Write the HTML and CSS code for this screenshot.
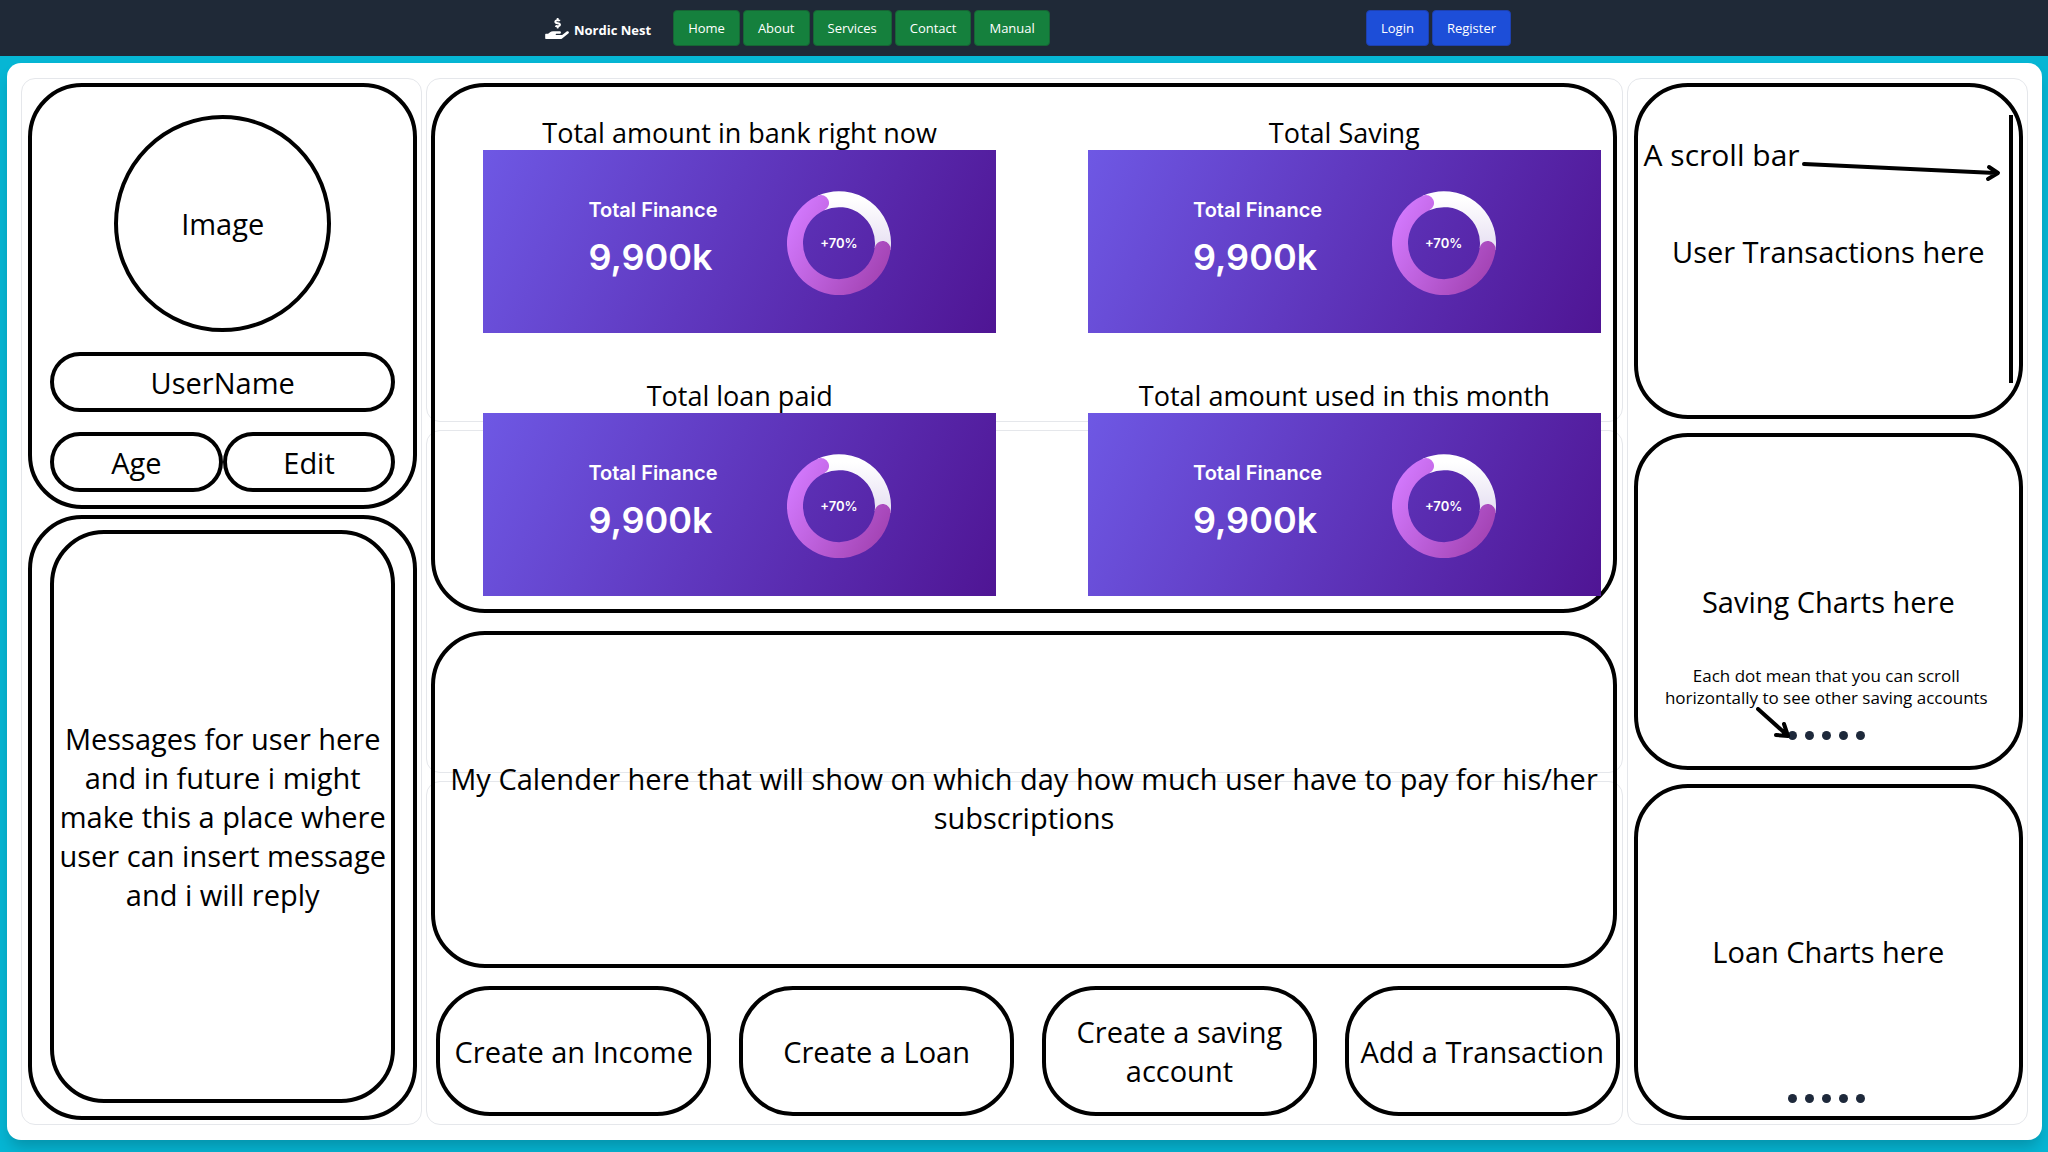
FILE: index.html
```html
<!DOCTYPE html>
<html lang="en">
<head>
<meta charset="utf-8">
<meta name="viewport" content="width=device-width, initial-scale=1">
<title>Nordic Nest</title>
<link rel="stylesheet" href="styles.css">
</head>
<body>
<header class="topbar">
  <nav class="topbar-inner">
    <a class="brand" href="#">
      <svg class="brand-icon" viewBox="0 0 576 512" aria-hidden="true"><path fill="currentColor" d="M271.06,144.3l54.27,14.3a8.59,8.59,0,0,1,6.63,8.1c0,4.6-4.09,8.4-9.12,8.4h-35.6a30,30,0,0,1-11.19-2.2c-5.24-2.2-11.28-1.7-15.3,2l-19,17.5a11.68,11.68,0,0,0-2.25,2.66,11.42,11.42,0,0,0,3.88,15.74,83.77,83.77,0,0,0,34.51,11.5V240c0,8.8,7.83,16,17.37,16h17.37c9.55,0,17.38-7.2,17.38-16V222.4c32.93-3.6,57.84-31,53.5-63-3.15-23-22.46-41.3-46.56-47.7L282.68,97.4a8.59,8.59,0,0,1-6.63-8.1c0-4.6,4.09-8.4,9.12-8.4h35.6A30,30,0,0,1,332,83.1c5.23,2.2,11.28,1.7,15.3-2l19-17.5A11.31,11.31,0,0,0,368.47,61a11.43,11.43,0,0,0-3.84-15.78,83.82,83.82,0,0,0-34.52-11.5V16c0-8.8-7.82-16-17.37-16H295.37C285.82,0,278,7.2,278,16V33.6c-32.89,3.6-57.85,31-53.51,63C227.63,119.6,247,137.9,271.06,144.3ZM565.27,328.1c-11.8-10.7-30.2-10-42.6,0L430.27,402a63.64,63.64,0,0,1-40,14H272a16,16,0,0,1,0-32h78.29c15.9,0,30.71-10.9,33.25-26.6a31.2,31.2,0,0,0,.46-5.46A32,32,0,0,0,352,320H192a117.66,117.66,0,0,0-74.1,26.29L71.4,384H16A16,16,0,0,0,0,400v96a16,16,0,0,0,16,16H372.77a64,64,0,0,0,40-14L564,377a32,32,0,0,0,1.28-48.9Z"/></svg>
      <span>Nordic Nest</span>
    </a>
    <div class="links">
      <a class="btn btn-green" href="#">Home</a>
      <a class="btn btn-green" href="#">About</a>
      <a class="btn btn-green" href="#">Services</a>
      <a class="btn btn-green" href="#">Contact</a>
      <a class="btn btn-green" href="#">Manual</a>
    </div>
    <div class="links links-end">
      <a class="btn btn-blue" href="#">Login</a>
      <a class="btn btn-blue" href="#">Register</a>
    </div>
  </nav>
</header>

<main class="board">
  <aside class="panel side">
    <section class="box profile">
      <div class="avatar">Image</div>
      <div class="pill">UserName</div>
      <div class="pill-row">
        <div class="pill">Age</div>
        <button class="pill" type="button">Edit</button>
      </div>
    </section>
    <section class="box messages">
      <p class="box message-text">Messages for user here and in future i might make this a place where user can insert message and i will reply</p>
    </section>
  </aside>

  <div class="center">
    <div class="backdrop" aria-hidden="true">
      <div class="panel"></div>
      <div class="panel"></div>
      <div class="panel"></div>
    </div>
    <div class="center-content">
      <section class="box stats">
        <article class="stat">
          <h2 class="stat-label">Total amount in bank right now</h2>
          <div class="stat-card">
            <div class="stat-text"><span class="stat-name">Total Finance</span><strong class="stat-value">9,900k</strong></div>
            <div class="donut">
              <svg viewBox="-52 -52 104 104" aria-hidden="true">
                <defs>
                  <linearGradient id="ring" gradientUnits="userSpaceOnUse" x1="-48" y1="-20" x2="42" y2="30"><stop offset="0" stop-color="#d177fb"/><stop offset="1" stop-color="#a545b6"/></linearGradient>
                  <linearGradient id="track" x1="0" y1="0" x2="0" y2="1"><stop offset="0" stop-color="#ffffff"/><stop offset="1" stop-color="#e6dff2"/></linearGradient>
                </defs>
                <path class="ring-track" d="M-18 -40A44 44 0 0 1 43.6 6"/>
                <path class="ring-value" d="M43.6 6A44 44 0 1 1 -18 -40"/>
              </svg>
              <span>+70%</span>
            </div>
          </div>
        </article>
        <article class="stat">
          <h2 class="stat-label">Total Saving</h2>
          <div class="stat-card">
            <div class="stat-text"><span class="stat-name">Total Finance</span><strong class="stat-value">9,900k</strong></div>
            <div class="donut">
              <svg viewBox="-52 -52 104 104" aria-hidden="true"><path class="ring-track" d="M-18 -40A44 44 0 0 1 43.6 6"/><path class="ring-value" d="M43.6 6A44 44 0 1 1 -18 -40"/></svg>
              <span>+70%</span>
            </div>
          </div>
        </article>
        <article class="stat">
          <h2 class="stat-label">Total loan paid</h2>
          <div class="stat-card">
            <div class="stat-text"><span class="stat-name">Total Finance</span><strong class="stat-value">9,900k</strong></div>
            <div class="donut">
              <svg viewBox="-52 -52 104 104" aria-hidden="true"><path class="ring-track" d="M-18 -40A44 44 0 0 1 43.6 6"/><path class="ring-value" d="M43.6 6A44 44 0 1 1 -18 -40"/></svg>
              <span>+70%</span>
            </div>
          </div>
        </article>
        <article class="stat">
          <h2 class="stat-label">Total amount used in this month</h2>
          <div class="stat-card">
            <div class="stat-text"><span class="stat-name">Total Finance</span><strong class="stat-value">9,900k</strong></div>
            <div class="donut">
              <svg viewBox="-52 -52 104 104" aria-hidden="true"><path class="ring-track" d="M-18 -40A44 44 0 0 1 43.6 6"/><path class="ring-value" d="M43.6 6A44 44 0 1 1 -18 -40"/></svg>
              <span>+70%</span>
            </div>
          </div>
        </article>
      </section>
      <section class="box calendar">
        <p>My Calender here that will show on which day how much user have to pay for his/her subscriptions</p>
      </section>
      <div class="actions">
        <button class="box action" type="button">Create an Income</button>
        <button class="box action" type="button">Create a Loan</button>
        <button class="box action" type="button">Create a saving account</button>
        <button class="box action" type="button">Add a Transaction</button>
      </div>
    </div>
  </div>

  <aside class="panel side side-right">
    <section class="box widget">
      <p class="scroll-note">A scroll bar</p>
      <h2 class="widget-title">User Transactions here</h2>
      <svg class="scroll-mark" width="230" height="300" viewBox="0 0 230 300" aria-hidden="true">
        <path d="M15 77L206 86M200 80L209 86L199 92"/>
        <path class="butt" d="M222 28V296"/>
      </svg>
    </section>
    <section class="box widget">
      <h2 class="widget-title">Saving Charts here</h2>
      <div class="widget-foot saving-foot">
        <p class="hint">Each dot mean that you can scroll horizontally to see other saving accounts</p>
        <div class="dots">
          <span></span><span></span><span></span><span></span><span></span>
          <svg class="dot-arrow" width="36" height="34" viewBox="0 0 36 34" aria-hidden="true"><path d="M2 2L31 28M28 17L32 29L20 28"/></svg>
        </div>
      </div>
    </section>
    <section class="box widget">
      <h2 class="widget-title">Loan Charts here</h2>
      <div class="widget-foot">
        <div class="dots"><span></span><span></span><span></span><span></span><span></span></div>
      </div>
    </section>
  </aside>
</main>
</body>
</html>
```
FILE: styles.css
```css
*, *::before, *::after { box-sizing: border-box; }

body {
  margin: 0;
  min-height: 100vh;
  display: flex;
  flex-direction: column;
  background: #06b6d4;
  color: #000;
  font-family: "Open Sans", "Noto Sans", sans-serif;
  font-size: 29px;
  line-height: 39px;
}

h2, p { margin: 0; font-size: inherit; font-weight: 400; }
button { font: inherit; color: inherit; cursor: pointer; }

/* Top bar */
.topbar {
  background: #1f2937;
  padding: 10px 0 10px 8px;
}
.topbar-inner {
  max-width: 966px;
  margin: 0 auto;
  display: flex;
  align-items: center;
  font-size: 13px;
  line-height: 18px;
}
.brand {
  display: flex;
  align-items: flex-end;
  gap: 5px;
  margin-right: 22px;
  color: #fff;
  font-weight: 700;
  text-decoration: none;
}
.brand-icon { width: 24px; height: 21px; }
.links { display: flex; gap: 3px; }
.links-end { margin-left: auto; }
.btn {
  padding: 8px 14px;
  border: 1px solid;
  border-radius: 4px;
  color: #fff;
  text-decoration: none;
}
.btn-green { background: #15803d; border-color: #166534; }
.btn-blue { background: #1d4ed8; border-color: #1e40af; }

/* Board */
.board {
  flex: 1;
  margin: 7px 6px 12px 7px;
  padding: 15px 14px;
  display: grid;
  grid-template-columns: 20% minmax(0, 1fr) 20%;
  gap: 4px;
  background: #fff;
  border-radius: 14px;
  box-shadow: 0 10px 15px -3px rgba(0, 0, 0, .2);
}
.panel {
  border: 1px solid #e5e7eb;
  border-radius: 14px;
}
.box {
  border: 4px solid #000;
  border-radius: 54px;
}
.side {
  display: flex;
  flex-direction: column;
  gap: 6px;
  padding: 4px 4px 4px 6px;
}

/* Profile */
.profile {
  display: flex;
  flex-direction: column;
  align-items: center;
  gap: 20px;
  padding: 28px 18px 13px;
}
.avatar {
  width: 217px;
  height: 217px;
  display: grid;
  place-items: center;
  border: 4px solid #000;
  border-radius: 50%;
}
.pill {
  width: 100%;
  height: 60px;
  display: grid;
  place-items: center;
  padding: 0;
  background: none;
  border: 4px solid #000;
  border-radius: 30px;
}
.pill-row { width: 100%; display: flex; }

.messages {
  flex: 1;
  display: flex;
  padding: 11px 18px 13px;
}
.message-text {
  width: 100%;
  display: flex;
  align-items: center;
  text-align: center;
}

/* Centre column: empty panels behind, content in front */
.center { display: grid; }
.backdrop, .center-content { grid-area: 1 / 1; }
.backdrop { display: grid; grid-template-rows: repeat(3, 1fr); gap: 8px; }
.center-content {
  display: flex;
  flex-direction: column;
  gap: 18px;
  padding: 5px 3px 9px 5px;
}
.stats, .calendar { margin-right: 3px; }
.stats {
  display: grid;
  grid-template-columns: 1fr 1fr;
  gap: 46px 92px;
  padding: 29px 12px 13px 48px;
}
.stat-label { font-size: 27px; line-height: 34px; text-align: center; }
.stat-card {
  height: 183px;
  padding: 3px 105px 0;
  display: flex;
  align-items: center;
  justify-content: space-between;
  background: linear-gradient(115deg, #6e58e4, #6039c0 45%, #4f1594);
  color: #fff;
  font-family: Inter, sans-serif;
}
.stat-text { display: flex; flex-direction: column; gap: 12px; padding-bottom: 8px; }
.stat-name { font-size: 20px; line-height: 24px; font-weight: 600; }
.stat-value { font-size: 36px; line-height: 46px; font-weight: 600; }
.donut {
  width: 104px;
  height: 104px;
  display: grid;
  place-items: center;
  font-size: 13px;
  line-height: 16px;
  font-weight: 600;
}
.donut > * { grid-area: 1 / 1; }
.ring-track, .ring-value { fill: none; stroke-width: 16; }
.ring-track { stroke: url(#track); }
.ring-value { stroke: url(#ring); stroke-linecap: round; }

.calendar {
  flex: 1;
  display: grid;
  place-items: center;
  padding: 12px 12px 16px;
  text-align: center;
}
.actions {
  display: grid;
  grid-template-columns: repeat(4, 1fr);
  gap: 28px;
  padding-left: 5px;
}
.action {
  min-height: 130px;
  padding: 0 8px;
  background: none;
}

/* Right column */
.side-right { gap: 14px; }
.widget {
  position: relative;
  flex: 1;
  display: grid;
  grid-template-rows: 1fr auto 1fr;
}
.scroll-note { grid-row: 1; padding: 48px 0 0 6px; font-size: 30px; }
.widget-title { grid-row: 2; text-align: center; }
.widget-foot {
  grid-row: 3;
  align-self: end;
  display: flex;
  flex-direction: column;
  align-items: center;
  gap: 22px;
  padding: 0 26px 13px 22px;
}
.saving-foot { padding-bottom: 26px; }
.hint { font-size: 17px; line-height: 22px; text-align: center; }
.dots { position: relative; display: flex; gap: 8px; }
.dots span {
  width: 9px;
  height: 9px;
  border-radius: 50%;
  background: #1e293b;
}
.scroll-mark, .dot-arrow {
  position: absolute;
  fill: none;
  stroke: #000;
  stroke-width: 4;
  stroke-linejoin: round;
  stroke-linecap: round;
}
.scroll-mark { top: 0; right: 0; }
.scroll-mark .butt { stroke-linecap: butt; }
.dot-arrow { right: 100%; bottom: 0; margin: 0 -4px -1px 0; }
```
